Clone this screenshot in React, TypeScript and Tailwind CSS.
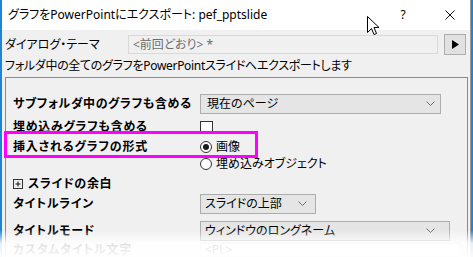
import React from "react";

const F = "[font-family:'Noto_Sans','Noto_Sans_CJK_JP',sans-serif] [font-feature-settings:'palt']";

function Chevron() {
  return (
    <svg width="9" height="5" viewBox="0 0 9 5" className="shrink-0">
      <path d="M0.5 0.5 L4.5 4.5 L8.5 0.5" stroke="#707070" strokeWidth="1" fill="none" />
    </svg>
  );
}

function Radio({ checked }: { checked?: boolean }) {
  return (
    <div className="w-[12px] h-[12px] rounded-full border border-[#333333] bg-white flex items-center justify-center shrink-0">
      {checked && <div className="w-[6px] h-[6px] rounded-full bg-[#1a1a1a]" />}
    </div>
  );
}

export default function App() {
  return (
    <div className={`relative w-[473px] h-[257px] overflow-hidden bg-[#f0f0f0] flex text-[12px] leading-none text-black ${F}`}>
      <div className="w-[2px] bg-[#1e84d6] shrink-0" />
      <div className="flex-1 flex flex-col min-w-0">
        {/* title bar */}
        <div className="h-[30px] bg-white flex items-center shrink-0">
          <div className="pl-[6px] text-[12px] flex-1 whitespace-nowrap">グラフをPowerPointにエクスポート: pef_pptslide</div>
          <div className="w-[14px] text-center text-[12px] mr-[35px]">?</div>
          <svg width="10" height="10" viewBox="0 0 10 10" className="mr-[15px]">
            <path d="M0.5 0.5 L9.5 9.5 M9.5 0.5 L0.5 9.5" stroke="#111" strokeWidth="1" />
          </svg>
        </div>
        {/* theme row */}
        <div className="mt-[4px] h-[21px] flex items-center pl-[3px] shrink-0">
          <div className="w-[123px] whitespace-nowrap">ダイアログ・テーマ</div>
          <div className="w-[310px] h-[19px] border border-[#d9d9d9] bg-[#f0f0f0] flex items-center pl-[4px] text-[#6d6d6d] whitespace-nowrap">
            &lt;前回どおり&gt; *
          </div>
          <div className="ml-[6px] w-[22px] h-[21px] border border-[#adadad] bg-[#e1e1e1] flex items-center justify-center">
            <svg width="7" height="9" viewBox="0 0 7 9">
              <path d="M0 0 L7 4.5 L0 9 Z" fill="#000" />
            </svg>
          </div>
        </div>
        {/* description */}
        <div className="mt-[3px] h-[16px] flex items-center pl-[3px] whitespace-nowrap shrink-0 tracking-[-0.3px]">
          フォルダ中の全てのグラフをPowerPointスライドへエクスポートします
        </div>
        {/* panel */}
        <div className="mt-[3px] ml-[3px] w-[463px] h-[220px] border border-[#8a8a8a] shrink-0 flex flex-col pt-[15px] pl-[7px]">
          <div className="h-[21px] flex items-center">
            <div className="w-[187px] font-bold whitespace-nowrap tracking-[0.6px]">サブフォルダ中のグラフも含める</div>
            <div className="w-[241px] h-[20px] border border-[#adadad] bg-[#e5e5e5] flex items-center justify-between pl-[6px] pr-[5px]">
              <span>現在のページ</span>
              <Chevron />
            </div>
          </div>
          <div className="mt-[4px] h-[18px] flex items-center">
            <div className="w-[187px] font-bold whitespace-nowrap tracking-[0.7px]">埋め込みグラフも含める</div>
            <div className="w-[13px] h-[13px] border border-[#333333] bg-white" />
          </div>
          <div className="mt-[2px] h-[18px] flex items-center">
            <div className="w-[187px] font-bold whitespace-nowrap tracking-[0.8px]">挿入されるグラフの形式</div>
            <Radio checked />
            <span className="ml-[4px]">画像</span>
          </div>
          <div className="h-[15px] flex items-center">
            <div className="w-[187px]" />
            <Radio />
            <span className="ml-[4px] whitespace-nowrap">埋め込みオブジェクト</span>
          </div>
          <div className="mt-[4px] h-[18px] flex items-center font-bold tracking-[0.7px]">
            <svg width="10" height="10" viewBox="0 0 10 10" className="mr-[5px]">
              <rect x="0.5" y="0.5" width="9" height="9" fill="none" stroke="#333" strokeWidth="1" />
              <path d="M2.5 5 H7.5 M5 2.5 V7.5" stroke="#111" strokeWidth="1" />
            </svg>
            <span>スライドの余白</span>
          </div>
          <div className="h-[21px] flex items-center">
            <div className="w-[187px] font-bold whitespace-nowrap tracking-[0.7px]">タイトルライン</div>
            <div className="w-[116px] h-[20px] border border-[#adadad] bg-[#e5e5e5] flex items-center justify-between pl-[4px] pr-[8px]">
              <span>スライドの上部</span>
              <Chevron />
            </div>
          </div>
          <div className="mt-[6px] h-[21px] flex items-center">
            <div className="w-[187px] font-bold whitespace-nowrap tracking-[0.7px]">タイトルモード</div>
            <div className="w-[250px] h-[20px] border border-[#adadad] bg-[#e5e5e5] flex items-center justify-between pl-[4px] pr-[14px]">
              <span>ウィンドウのロングネーム</span>
              <Chevron />
            </div>
          </div>
          <div className="mt-[2px] h-[14px] flex items-center">
            <div className="w-[187px] font-bold whitespace-nowrap tracking-[0.7px]">カスタムタイトル文字</div>
            <div className="w-[260px] h-[14px] border border-[#d0d0d0] bg-white flex items-center pl-[4px]">
              <span>&lt;PL&gt;</span>
            </div>
          </div>
        </div>
      </div>
      <div className="w-[1px] bg-[#9a9a9a] shrink-0" />
      <div className="w-[2px] bg-[#1e84d6] shrink-0" />

      {/* magenta highlight */}
      <div className="absolute left-[4px] top-[131px] w-[254px] h-[27px] border-[3px] border-[#ff00ff]" />

      {/* mouse cursor */}
      <svg className="absolute left-[367px] top-[16px]" width="13" height="20" viewBox="0 0 13 20">
        <path
          d="M0.5 0.5 L0.5 16.5 L4.5 12.5 L7 18.5 L9.5 17.5 L7 11.5 L12 11.5 Z"
          fill="#fff"
          stroke="#000"
          strokeWidth="1"
          strokeLinejoin="miter"
        />
      </svg>

      {/* bottom fade */}
      <div className="absolute left-0 right-0 bottom-0 h-[27px] bg-gradient-to-b from-[rgba(255,255,255,0)] via-[rgba(255,255,255,0.88)] to-[rgba(255,255,255,0.97)]" />
    </div>
  );
}
